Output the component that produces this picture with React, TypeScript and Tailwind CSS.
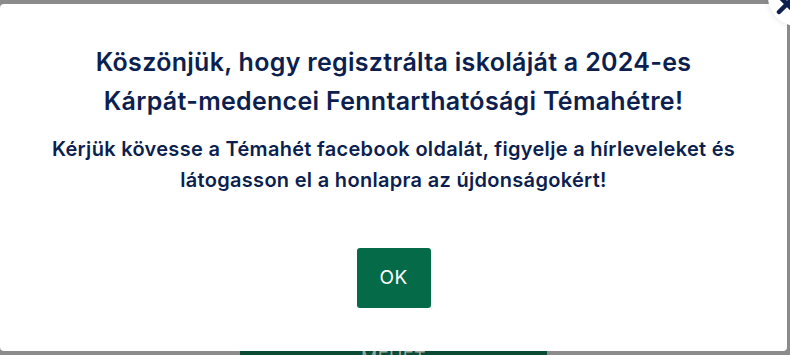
export default function App() {
  return (
    <div className="relative h-[355px] w-full overflow-hidden bg-[#8b8b8b] pr-[3px] pt-[4px]" style={{ fontFamily: 'Inter, "Open Sans", sans-serif' }}>
      {/* page behind the overlay */}
      <div className="absolute left-[240px] top-[351px] flex h-[50px] w-[307px] justify-center bg-[#0b4a33]">
        <span className="-mt-[6px] text-[18px] tracking-wide text-[#9aa8a2]">MEHET</span>
      </div>

      {/* modal */}
      <div className="relative flex h-[347px] flex-col items-center rounded-[4px] bg-white pt-[39px] text-center text-[#0c1f4f]">
        <h2 className="text-[25px] font-semibold leading-[39px] tracking-[0.3px]">
          Köszönjük, hogy regisztrálta iskoláját a 2024-es
          <br />
          Kárpát-medencei Fenntarthatósági Témahétre!
        </h2>
        <p className="mt-[13px] text-[20px] font-semibold leading-[31px] tracking-[0.3px]">
          Kérjük kövesse a Témahét facebook oldalát, figyelje a hírleveleket és
          <br />
          látogasson el a honlapra az újdonságokért!
        </p>
        <button className="mt-[52px] flex h-[60px] w-[74px] items-center justify-center rounded-[3px] bg-[#046a47] text-[19px] tracking-wide text-white">
          OK
        </button>
      </div>

      {/* close button */}
      <div className="absolute -right-[36px] -top-[32px] h-[58px] w-[58px] rounded-full bg-white shadow-[0_0_6px_rgba(0,0,0,0.12)]">
        <svg className="absolute left-[7px] top-[24px]" width="24" height="24" viewBox="0 0 24 24">
          <path d="M4 4 L20 20 M20 4 L4 20" stroke="#0c1f4f" strokeWidth="4.5" strokeLinecap="round" />
        </svg>
      </div>
    </div>
  )
}
